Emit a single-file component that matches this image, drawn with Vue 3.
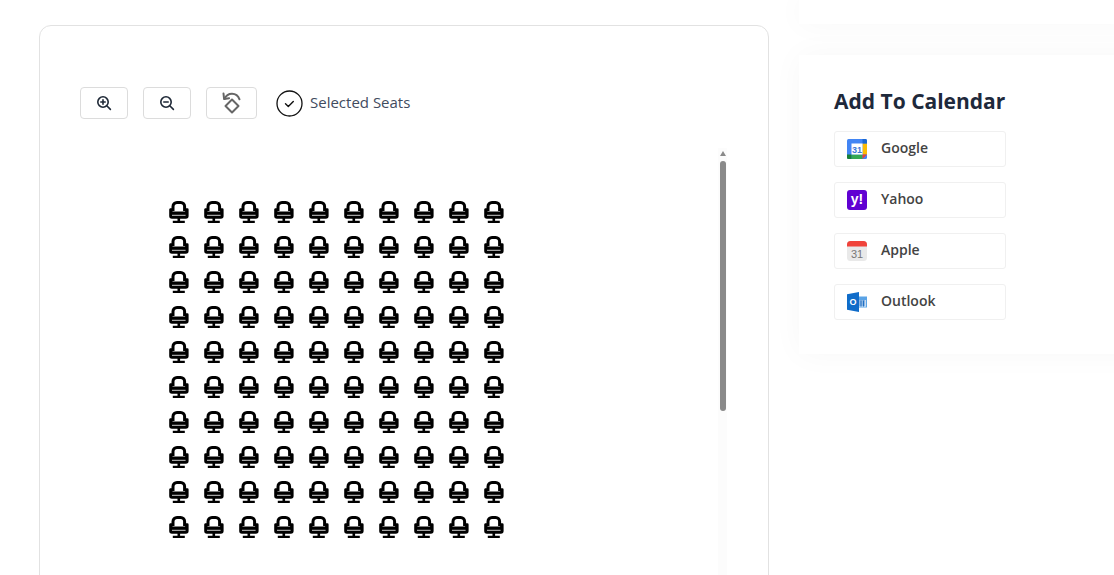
<template>
  <div class="page">
    <section class="map-card">
      <div class="toolbar">
        <button class="tool-btn">
          <svg width="16" height="16" viewBox="0 0 16 16" fill="none" stroke="#1f2937" stroke-width="1.6" stroke-linecap="round">
            <circle cx="7" cy="7" r="5.2" />
            <path d="M11 11l3.400 3.400M7 4.800v4.400M4.800 7h4.400" />
          </svg>
        </button>
        <button class="tool-btn">
          <svg width="16" height="16" viewBox="0 0 16 16" fill="none" stroke="#1f2937" stroke-width="1.6" stroke-linecap="round">
            <circle cx="7" cy="7" r="5.2" />
            <path d="M11 11l3.400 3.400M4.800 7h4.400" />
          </svg>
        </button>
        <button class="tool-btn reset-btn">
          <svg width="22" height="24" viewBox="0 0 22 24" fill="none" stroke="#666" stroke-width="2" stroke-linejoin="round" stroke-linecap="round">
            <path d="M11 8.500l6.500 6.500-6.500 6.500-6.500-6.500z" />
            <path d="M3.500 8C5 4.500 8 2.800 11 2.800s6 1.500 7.500 5.500" />
            <path d="M2.500 2.500l.6 5.500 5-.8" />
          </svg>
        </button>
        <div class="selected">
          <svg width="27" height="27" viewBox="0 0 27 27" fill="none" stroke="#111" stroke-linecap="round" stroke-linejoin="round">
            <circle cx="13.500" cy="13.500" r="12.500" stroke-width="1.300" />
            <path d="M9.500 13.800l2.800 2.700 5-5" stroke-width="1.400" />
          </svg>
          <span class="selected-label">Selected Seats</span>
        </div>
      </div>

      <div class="seat-area">
        <div class="seat-scroll">
          <div class="seat-grid">
            <svg v-for="n in seats" :key="n" class="seat" width="20" height="22" viewBox="0 0 20 22">
              <path d="M4 10V5.500a4 4 0 0 1 4-4h3.600a4 4 0 0 1 4 4V10" fill="none" stroke="#000" stroke-width="3" />
              <path d="M1.200 7.200H3.500v3.300h12.600V7.200h2.300a1.200 1.200 0 0 1 1.200 1.200V15a2.800 2.800 0 0 1-2.800 2.800H3A2.800 2.800 0 0 1 .2 15V8.400a1.200 1.200 0 0 1 1-1.200z" fill="#000" />
              <path d="M3 14.300h13.600" stroke="#fff" stroke-width=".8" />
              <path d="M8.500 17h2.600v3.500H8.500zM3.800 19.800h12V22h-12z" fill="#000" />
            </svg>
          </div>
        </div>
        <div class="scroll-track">
          <span class="scroll-arrow"></span>
          <span class="scroll-thumb"></span>
        </div>
      </div>
    </section>

    <aside class="side">
      <div class="side-top"></div>
      <div class="calendar-card">
        <h2>Add To Calendar</h2>
        <a v-for="item in calendars" :key="item" class="cal-link">
          <span class="cal-icon">
            <svg v-if="item === 'Google'" width="20" height="20" viewBox="0 0 20 20">
              <rect x="0" y="0" width="20" height="20" rx="1.500" fill="#4285f4" />
              <rect x="15.500" y="4.500" width="4.500" height="11" fill="#fbbc04" />
              <rect x="4.500" y="15.500" width="11" height="4.500" fill="#34a853" />
              <path d="M0 15.500h4.500V20H1.500A1.500 1.500 0 0 1 0 18.500z" fill="#188038" />
              <path d="M15.500 0h3A1.500 1.500 0 0 1 20 1.500v3h-4.500z" fill="#1967d2" />
              <path d="M15.500 15.500H20L15.500 20z" fill="#ea4335" />
              <rect x="4.500" y="4.500" width="11" height="11" fill="#fff" />
              <text x="10" y="13.700" text-anchor="middle" class="g-num">31</text>
            </svg>
            <span v-else-if="item === 'Yahoo'" class="yahoo">y!</span>
            <svg v-else-if="item === 'Apple'" width="20" height="20" viewBox="0 0 20 20">
              <rect x="0" y="0" width="20" height="20" rx="3.500" fill="#e9e9e9" />
              <path d="M0 5.500V3.500A3.500 3.500 0 0 1 3.500 0h13A3.500 3.500 0 0 1 20 3.500v2z" fill="#f0433a" />
              <text x="10" y="16.500" text-anchor="middle" class="a-num">31</text>
            </svg>
            <svg v-else width="20" height="20" viewBox="0 0 20 20">
              <rect x="10" y="4.500" width="10" height="11" fill="#5aa3e6" />
              <path d="M11 8h8v6.500h-8z" fill="#fff" />
              <path d="M12 9h6.500M12 11h6.500M12 13h6.500M14 8.500v6M16.500 8.500v6" stroke="#1f6fc4" stroke-width="1" />
              <path d="M0 2.300L12 0v20L0 17.700z" fill="#0f6cc9" />
              <text x="6" y="13" text-anchor="middle" class="o-letter">O</text>
            </svg>
          </span>
          <span class="cal-name">{{ item }}</span>
        </a>
      </div>
    </aside>
  </div>
</template>

<script setup>
const seats = 100
const calendars = ['Google', 'Yahoo', 'Apple', 'Outlook']
</script>

<style>
html,
body {
  margin: 0;
  background: #fff;
  overflow: hidden;
}
</style>

<style scoped>
.page {
  display: flex;
  align-items: flex-start;
  height: 575px;
  padding-left: 39px;
  overflow: hidden;
  font-family: "Open Sans", "Noto Sans", sans-serif;
}

.map-card {
  flex: none;
  box-sizing: border-box;
  width: 730px;
  height: 600px;
  margin-top: 25px;
  padding: 61px 41px 0 40px;
  border: 1px solid #e2e2e2;
  border-radius: 12px;
}

.toolbar {
  display: flex;
  align-items: center;
  gap: 15px;
}

.tool-btn {
  display: flex;
  align-items: center;
  justify-content: center;
  box-sizing: border-box;
  width: 48px;
  height: 32px;
  padding: 0;
  background: #fff;
  border: 1px solid #dcdcdc;
  border-radius: 4px;
}

.reset-btn {
  width: 51px;
}

.selected {
  display: flex;
  align-items: center;
  gap: 7px;
  margin-left: 4px;
  font-size: 15px;
  color: #414b5e;
}

.selected-label {
  margin-bottom: 2px;
}

.seat-area {
  display: flex;
  margin-top: 29px;
}

.seat-scroll {
  flex: 1;
  padding: 53px 0 0 89px;
}

.seat-grid {
  display: grid;
  grid-template-columns: repeat(10, 20px);
  grid-auto-rows: 22px;
  gap: 13px 15px;
}

.seat {
  display: block;
}

.scroll-track {
  display: flex;
  flex-direction: column;
  align-items: center;
  flex: none;
  width: 9px;
  height: 430px;
  background: #fcfcfc;
}

.scroll-arrow {
  width: 0;
  height: 0;
  margin-top: 3px;
  border-left: 3.500px solid transparent;
  border-right: 3.500px solid transparent;
  border-bottom: 5px solid #8a8a8a;
}

.scroll-thumb {
  width: 6px;
  height: 250px;
  margin-top: 5px;
  background: #8a8a8a;
  border-radius: 3px;
}

.side {
  flex: none;
  display: flex;
  flex-direction: column;
  gap: 31px;
  width: 345px;
  margin-left: 30px;
}

.side-top {
  height: 24px;
  background: #fff;
  box-shadow: 0 0 30px rgba(0, 0, 0, 0.035);
}

.calendar-card {
  box-sizing: border-box;
  height: 299px;
  padding: 31px 35px 0;
  background: #fff;
  box-shadow: 0 0 30px rgba(0, 0, 0, 0.035);
}

h2 {
  margin: 0 0 15px;
  font-size: 21px;
  line-height: 30px;
  font-weight: 700;
  color: #1e293b;
}

.cal-link {
  display: flex;
  align-items: center;
  gap: 14px;
  box-sizing: border-box;
  width: 172px;
  height: 36px;
  margin-bottom: 15px;
  padding-left: 12px;
  border: 1px solid #f0f0f0;
  border-radius: 3px;
}

.cal-icon {
  display: flex;
  width: 20px;
  height: 20px;
}

.cal-name {
  margin-bottom: 4px;
  font-size: 14px;
  font-weight: 600;
  color: #434343;
}

.yahoo {
  width: 20px;
  height: 20px;
  border-radius: 3px;
  background: #6001d2;
  color: #fff;
  font-family: "Liberation Sans", sans-serif;
  font-size: 14px;
  font-weight: 700;
  line-height: 19px;
  text-align: center;
}

.g-num {
  font-family: "Liberation Sans", sans-serif;
  font-size: 9px;
  font-weight: 700;
  fill: #3a78d8;
}

.a-num {
  font-family: "Liberation Sans", sans-serif;
  font-size: 11px;
  fill: #777;
}

.o-letter {
  font-family: "Liberation Sans", sans-serif;
  font-size: 9px;
  font-weight: 700;
  fill: #fff;
}
</style>
